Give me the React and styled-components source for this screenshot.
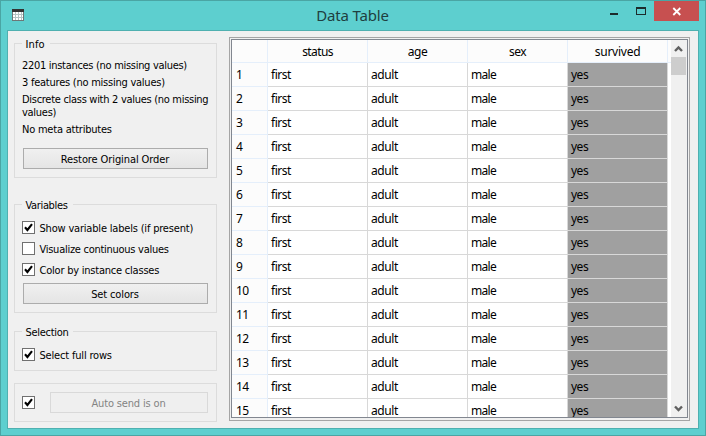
import React from "react";
import styled, { createGlobalStyle } from "styled-components";

const ui = '"DejaVu Sans Condensed", "DejaVu Sans", sans-serif';
const grid = '"Noto Sans", "Open Sans", sans-serif';

const GlobalStyle = createGlobalStyle`
  * { box-sizing: border-box; }
  body { margin: 0; overflow: hidden; }
`;

const Window = styled.div`
  width: 706px;
  height: 436px;
  border: 1px solid #4aa5a4;
  background: #5dcfcf;
  display: flex;
  flex-direction: column;
  color: #000;
`;

const TitleBar = styled.header`
  height: 29px;
  flex: none;
  display: grid;
  grid-template-columns: 131px 1fr 126px;
  padding: 0 6px 0 0;
`;

const AppIcon = styled.svg`
  display: block;
  margin: 8px 0 0 11px;
`;

const Title = styled.h1`
  margin: 0;
  text-align: center;
  font: 400 15px/29px ${grid};
  letter-spacing: -0.15px;
  color: #1f3f40;
`;

const WindowButtons = styled.div`
  display: flex;
  justify-content: flex-end;
  svg { display: block; }
`;

const CloseButton = styled.button`
  width: 45px;
  height: 20px;
  padding: 0;
  border: 0;
  background: #c75050;
`;

const Body = styled.main`
  flex: none;
  width: 692px;
  height: 399px;
  margin-left: 6px;
  border: 1px solid #4fb0b0;
  background: #f0f0f0;
  display: flex;
`;

const Sidebar = styled.aside`
  width: 203px;
  margin: 12px 0 0 6px;
  display: flex;
  flex-direction: column;
  font: 11px/13px ${ui};
`;

const Group = styled.section`
  height: ${(p) => p.$height}px;
  margin-bottom: ${(p) => p.$gap}px;
  flex: none;
  border: 1px solid #dcdcdc;
  padding: 0 8px 0 7px;
  display: flex;
  flex-direction: column;
`;

const GroupTitle = styled.h2`
  align-self: flex-start;
  height: 13px;
  flex: none;
  margin: -7px 0 0;
  padding: 0 5px 0 3.5px;
  background: #f0f0f0;
  font: inherit;
  line-height: 15px;
`;

const Track = styled.span`
  letter-spacing: ${(p) => p.$track}px;
  white-space: nowrap;
`;

const InfoText = styled.p`
  margin: 0 0 4px;
`;

const InfoList = styled.div`
  padding-top: 9px;
  height: 98px;
`;

const Button = styled.button`
  height: 21px;
  flex: ${(p) => (p.$grow ? "1" : "none")};
  margin: ${(p) => p.$top || 0}px 0 0 1px;
  padding: 1px 1px 0 0;
  border: 1px solid ${(p) => (p.disabled ? "#d9d9d9" : "#acacac")};
  background: ${(p) => (p.disabled ? "#efefef" : "linear-gradient(#f0f0f0, #e5e5e5)")};
  color: ${(p) => (p.disabled ? "#838383" : "#000")};
  font: inherit;
`;

const CheckRow = styled.label`
  display: flex;
  align-items: flex-start;
  gap: 4.5px;
  height: 13px;
  line-height: 15px;
  margin-top: ${(p) => p.$top}px;
`;

const Box = styled.span`
  width: 13px;
  height: 13px;
  flex: none;
  border: 1px solid #707070;
  background: #fff;
  svg { display: block; }
`;

const SendRow = styled.div`
  display: flex;
  align-items: center;
  gap: 14px;
  padding-top: 8px;
`;

const TableFrame = styled.section`
  width: 461px;
  height: 384px;
  margin: 6px 0 0 12px;
  padding: 1px 1px 2px;
  border: 1px solid #a5a5a5;
`;

const TableView = styled.div`
  height: 379px;
  border: 1px solid #828790;
  background: #fff;
  display: flex;
  overflow: hidden;
`;

const Grid = styled.div`
  width: 439px;
  flex: none;
  font: 12px/22px ${grid};
`;

const Row = styled.div`
  display: grid;
  grid-template-columns: 36px repeat(4, 100px) 3px;
  grid-template-rows: ${(p) => (p.$head ? 23 : 24)}px;
`;

const HeadCell = styled.div`
  border-right: ${(p) => (p.$last ? 0 : 1)}px solid #e5effb;
  border-bottom: 1px solid #e5effb;
  background: #fcfcfc;
  text-align: ${(p) => (p.$row ? "left" : "center")};
  padding-left: ${(p) => (p.$row ? 4 : 0)}px;
  line-height: 24px;
`;

const Cell = styled.div`
  border-right: 1px solid #d8d8d8;
  border-bottom: 1px solid #d8d8d8;
  background: ${(p) => (p.$filled ? "#a0a0a0" : "#fff")};
  padding-left: 3px;
  line-height: 24px;
`;

const ScrollBar = styled.div`
  width: 16px;
  background: #f0f0f0;
  display: flex;
  flex-direction: column;
  svg { display: block; flex: none; }
`;

const Thumb = styled.div`
  width: 15px;
  height: 18px;
  background: #cdcdcd;
  margin-bottom: auto;
`;

function CheckBox({ checked }) {
  return (
    <Box>
      {checked && (
        <svg width="11" height="11" viewBox="0 0 11 11">
          <path d="M2 5.3 4.4 8 9 2.2" fill="none" stroke="#000" strokeWidth="2.1" />
        </svg>
      )}
    </Box>
  );
}

function Check({ checked, top, track, children }) {
  return (
    <CheckRow $top={top}>
      <CheckBox checked={checked} />
      <Track $track={track}>{children}</Track>
    </CheckRow>
  );
}

const columns = [
  { name: "status", value: "first", headTrack: -0.6, track: -0.5 },
  { name: "age", value: "adult", headTrack: -0.5, track: -0.4 },
  { name: "sex", value: "male", headTrack: -0.5, track: -0.7 },
  { name: "survived", value: "yes", headTrack: -0.25, track: -0.5, filled: true },
];
const rows = Array.from({ length: 15 }, (_, i) => i + 1);

export default function App() {
  return (
    <Window>
      <GlobalStyle />
      <TitleBar>
        <AppIcon width="12" height="12" viewBox="0 0 12 12" shapeRendering="crispEdges">
          <path d="M0 0h12v12H0z" fill="#fff" />
          <path d="M0 5.5h12M0 8.5h12M3.5 3v9M6.5 3v9M9.5 3v9" stroke="#b4c4c4" />
          <path d="M.5 3v8.5h11V3" fill="none" stroke="#6d7777" />
          <path d="M0 0h12v3H0z" fill="#333" />
        </AppIcon>
        <Title>Data Table</Title>
        <WindowButtons>
          <svg width="54" height="20" viewBox="0 0 54 20" shapeRendering="crispEdges">
            <path d="M10 12h8v2h-8z" fill="#1c2c2c" />
            <path d="M36 6h10v8H36zM37 8v5h8V8z" fillRule="evenodd" fill="#1c2c2c" />
          </svg>
          <CloseButton aria-label="Close">
            <svg width="45" height="20" viewBox="0 0 45 20">
              <path d="m19.3 7 7 7m0-7-7 7" stroke="#fff" strokeWidth="1.8" />
            </svg>
          </CloseButton>
        </WindowButtons>
      </TitleBar>
      <Body>
        <Sidebar>
          <Group $height={135} $gap={26}>
            <GroupTitle><Track $track={0.1}>Info</Track></GroupTitle>
            <InfoList>
              <InfoText><Track $track={-0.3}>2201 instances (no missing values)</Track></InfoText>
              <InfoText><Track $track={-0.24}>3 features (no missing values)</Track></InfoText>
              <InfoText>
                <Track $track={-0.29}>Discrete class with 2 values (no missing</Track>
                <br />
                <Track $track={-0.28}>values)</Track>
              </InfoText>
              <InfoText><Track $track={-0.22}>No meta attributes</Track></InfoText>
            </InfoList>
            <Button><Track $track={-0.1}>Restore Original Order</Track></Button>
          </Group>
          <Group $height={109} $gap={18}>
            <GroupTitle><Track $track={-0.35}>Variables</Track></GroupTitle>
            <Check checked top={10} track={-0.19}>Show variable labels (if present)</Check>
            <Check top={8} track={-0.27}>Visualize continuous values</Check>
            <Check checked top={8} track={-0.22}>Color by instance classes</Check>
            <Button $top={7}><Track $track={-0.13}>Set colors</Track></Button>
          </Group>
          <Group $height={40} $gap={12}>
            <GroupTitle><Track $track={-0.3}>Selection</Track></GroupTitle>
            <Check checked top={10} track={-0.18}>Select full rows</Check>
          </Group>
          <Group $height={39} $gap={0}>
            <SendRow>
              <CheckBox checked />
              <Button disabled $grow><Track $track={-0.16}>Auto send is on</Track></Button>
            </SendRow>
          </Group>
        </Sidebar>
        <TableFrame>
          <TableView>
            <Grid>
              <Row $head>
                <HeadCell />
                {columns.map((c) => (
                  <HeadCell key={c.name}><Track $track={c.headTrack}>{c.name}</Track></HeadCell>
                ))}
                <HeadCell $last />
              </Row>
              {rows.map((n) => (
                <Row key={n}>
                  <HeadCell $row><Track $track={-0.6}>{n}</Track></HeadCell>
                  {columns.map((c) => (
                    <Cell key={c.name} $filled={c.filled}><Track $track={c.track}>{c.value}</Track></Cell>
                  ))}
                </Row>
              ))}
            </Grid>
            <ScrollBar>
              <svg width="15" height="17" viewBox="0 0 15 17">
                <path d="M4 11 7.5 7.5 11 11" fill="none" stroke="#606060" strokeWidth="2.4" />
              </svg>
              <Thumb />
              <svg width="15" height="17" viewBox="0 0 15 17">
                <path d="M4 6.5 7.5 10 11 6.5" fill="none" stroke="#606060" strokeWidth="2.4" />
              </svg>
            </ScrollBar>
          </TableView>
        </TableFrame>
      </Body>
    </Window>
  );
}
